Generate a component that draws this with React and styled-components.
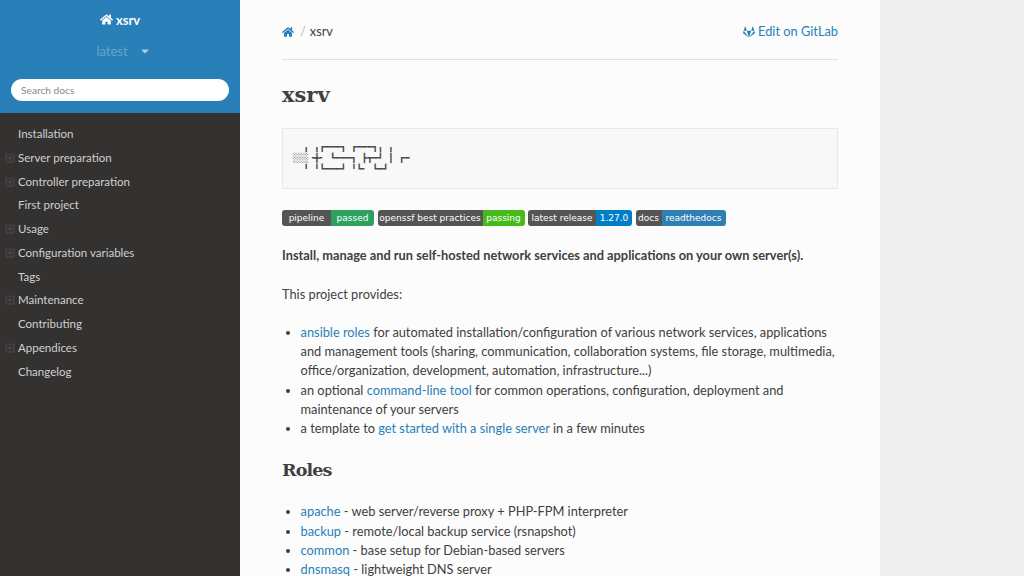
import React from "react";
import styled, { createGlobalStyle } from "styled-components";
import { FaHome, FaGitlab, FaRegPlusSquare, FaCaretDown } from "react-icons/fa";

const GlobalStyle = createGlobalStyle`
  html, body {
    margin: 0;
    height: 100%;
    overflow: hidden;
    background: #efefef;
    font-family: "Lato", "Liberation Sans", sans-serif;
    color: #404040;
  }
`;

const navItems = [
  { label: "Installation" },
  { label: "Server preparation", expand: true },
  { label: "Controller preparation", expand: true },
  { label: "First project" },
  { label: "Usage", expand: true },
  { label: "Configuration variables", expand: true },
  { label: "Tags" },
  { label: "Maintenance", expand: true },
  { label: "Contributing" },
  { label: "Appendices", expand: true },
  { label: "Changelog" },
];

const badges = [
  { left: "pipeline", right: "passed", color: "#2da160", leftW: 49, rightW: 43 },
  { left: "openssf best practices", right: "passing", color: "#44bb1a", leftW: 105, rightW: 42 },
  { left: "latest release", right: "1.27.0", color: "#007ec6", leftW: 68, rightW: 36 },
  { left: "docs", right: "readthedocs", color: "#2f7fb5", leftW: 26, rightW: 64 },
];

const roles = [
  ["apache", " - web server/reverse proxy + PHP-FPM interpreter"],
  ["backup", " - remote/local backup service (rsnapshot)"],
  ["common", " - base setup for Debian-based servers"],
  ["dnsmasq", " - lightweight DNS server"],
];

const App = () => {
  return (
    <Page>
      <GlobalStyle />
      <Sidebar>
        <SideHeader>
          <Brand>
            <FaHome size={13} />
            xsrv
          </Brand>
          <Version>
            latest
            <FaCaretDown size={12} />
          </Version>
          <SearchBox placeholder="Search docs" />
        </SideHeader>
        <Nav>
          {navItems.map((item) => (
            <NavItem key={item.label}>
              {item.expand && (
                <Expand>
                  <FaRegPlusSquare size={10} />
                </Expand>
              )}
              {item.label}
            </NavItem>
          ))}
        </Nav>
      </Sidebar>
      <Main>
        <Crumbs>
          <CrumbLeft>
            <HomeLink>
              <FaHome size={12} />
            </HomeLink>
            <Slash>/</Slash>
            xsrv
          </CrumbLeft>
          <EditLink>
            <FaGitlab size={12} />
            Edit on GitLab
          </EditLink>
        </Crumbs>
        <Title>xsrv</Title>
        <AsciiLogo>{`  ╻ ╻┏━━━┓ ┏━━━┓╻ ╻
░░░╺╋╸ ┗━━━┓ ┣┳━┛ ┃ ┏━
  ╹ ╹┗━━━┛ ╹┗╸ ┗━┛`}</AsciiLogo>
        <Badges>
          {badges.map((b) => (
            <Badge key={b.left}>
              <BadgeLeft $width={b.leftW}>{b.left}</BadgeLeft>
              <BadgeRight $width={b.rightW} $color={b.color}>
                {b.right}
              </BadgeRight>
            </Badge>
          ))}
        </Badges>
        <Lead>Install, manage and run self-hosted network services and applications on your own server(s).</Lead>
        <Para>This project provides:</Para>
        <List>
          <li>
            <Link>ansible roles</Link> for automated installation/configuration of various network services, applications
            and management tools (sharing, communication, collaboration systems, file storage, multimedia,
            office/organization, development, automation, infrastructure...)
          </li>
          <li>
            an optional <Link>command-line tool</Link> for common operations, configuration, deployment and maintenance of
            your servers
          </li>
          <li>
            a template to <Link>get started with a single server</Link> in a few minutes
          </li>
        </List>
        <Heading>Roles</Heading>
        <List>
          {roles.map(([name, rest]) => (
            <li key={name}>
              <Link>{name}</Link>
              {rest}
            </li>
          ))}
        </List>
      </Main>
    </Page>
  );
};

const Page = styled.div`
  display: flex;
  height: 100vh;
  overflow: hidden;
`;

const Sidebar = styled.aside`
  width: 240px;
  flex: none;
  background: #343131;
`;

const SideHeader = styled.div`
  height: 113px;
  box-sizing: border-box;
  padding-top: 11px;
  background: #2980b9;
  display: flex;
  flex-direction: column;
  align-items: center;
`;

const Brand = styled.div`
  display: flex;
  align-items: center;
  gap: 3px;
  height: 17px;
  font-size: 13px;
  font-weight: 700;
  color: #fcfcfc;
`;

const Version = styled.div`
  display: flex;
  align-items: center;
  gap: 11px;
  height: 18px;
  margin-top: 14px;
  padding-left: 7px;
  font-size: 13px;
  color: rgba(255, 255, 255, 0.3);

  svg {
    color: rgba(255, 255, 255, 0.6);
  }
`;

const SearchBox = styled.input`
  width: 218px;
  height: 22px;
  margin-top: 19px;
  box-sizing: border-box;
  padding: 0 10px;
  border: none;
  border-radius: 50px;
  background: #fff;
  font: 10.2px "Lato", sans-serif;
  outline: none;

  &::placeholder {
    color: #888;
    opacity: 1;
  }
`;

const Nav = styled.nav`
  padding-top: 9px;
`;

const NavItem = styled.div`
  position: relative;
  height: 23.75px;
  line-height: 23.75px;
  padding-left: 18px;
  font-size: 11.52px;
  color: #d0d0d0;
`;

const Expand = styled.span`
  position: absolute;
  left: 5px;
  top: 1px;
  color: #4f4c4c;
`;

const Main = styled.main`
  width: 640px;
  flex: none;
  box-sizing: border-box;
  padding: 0 42px;
  background: #fcfcfc;
  font-size: 12.8px;
  line-height: 19.2px;
`;

const Crumbs = styled.div`
  display: flex;
  justify-content: space-between;
  align-items: center;
  height: 60px;
  padding-top: 5px;
  box-sizing: border-box;
  border-bottom: 1px solid #e1e4e5;
`;

const CrumbLeft = styled.div`
  display: flex;
  align-items: center;
`;

const HomeLink = styled.span`
  display: flex;
  color: #2980b9;
`;

const Slash = styled.span`
  margin: 0 4px 0 6px;
  color: #bbb;
`;

const EditLink = styled.span`
  display: flex;
  align-items: center;
  gap: 3px;
  color: #2980b9;
`;

const Title = styled.h1`
  margin: 21px 0 0;
  height: 27px;
  line-height: 27px;
  font-family: "DejaVu Serif", serif;
  font-size: 21px;
  font-weight: 700;
`;

const AsciiLogo = styled.pre`
  margin: 20px 0 0;
  height: 61px;
  box-sizing: border-box;
  padding: 13px 10px;
  border: 1px solid #e8e8e8;
  background: #f8f8f8;
  font-family: "DejaVu Sans Mono", monospace;
  font-size: 8.8px;
  line-height: 11px;
  color: #4a4a4a;
`;

const Badges = styled.div`
  display: flex;
  gap: 3.5px;
  margin-top: 21px;
`;

const Badge = styled.div`
  display: flex;
  height: 16px;
  border-radius: 3px;
  overflow: hidden;
  font-family: "DejaVu Sans", sans-serif;
  font-size: 9px;
  line-height: 16px;
  color: #fff;
`;

const BadgeLeft = styled.span`
  width: ${(p) => p.$width}px;
  text-align: center;
  background: #555;
`;

const BadgeRight = styled.span`
  width: ${(p) => p.$width}px;
  text-align: center;
  background: ${(p) => p.$color};
`;

const Lead = styled.p`
  margin: 20px 0 0;
  font-weight: 700;
`;

const Para = styled.p`
  margin: 19.4px 0 0;
`;

const List = styled.ul`
  margin: 19.2px 0 0;
  padding: 0 0 0 18.6px;
`;

const Link = styled.a`
  color: #2980b9;
`;

const Heading = styled.h2`
  margin: 18px 0 0;
  height: 27px;
  line-height: 28px;
  font-family: "DejaVu Serif", serif;
  font-size: 17.5px;
  letter-spacing: -0.9px;
  font-weight: 700;
`;

export default App;
